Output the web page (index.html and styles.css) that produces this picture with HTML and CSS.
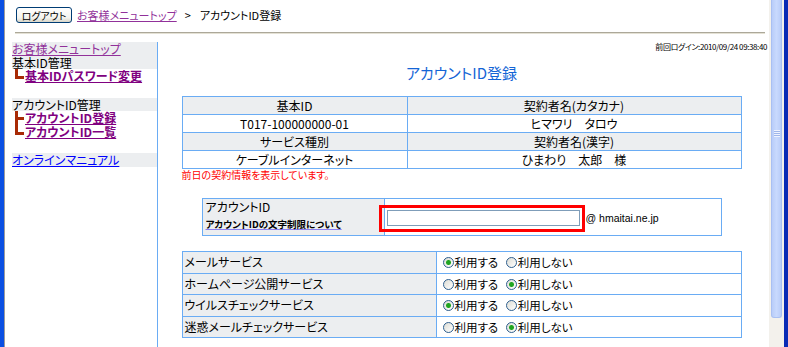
FILE: index.html
```html
<!DOCTYPE html>
<html lang="ja">
<head>
    <meta charset="UTF-8">
    <title>アカウントID登録</title>
    <link rel="stylesheet" href="styles.css">
</head>
<body>
    <div class="window">
        <div class="frame-left"></div>
        <div class="page">
            <div class="header">
                <button class="logout-btn">ログアウト</button>
                <a href="#" class="crumb">お客様メニュートップ</a>
                <span class="sep">&gt;</span>
                <span>アカウントID登録</span>
            </div>

            <div class="layout">
                <div class="sidebar">
                    <div class="side-head"><a href="#" class="visited">お客様メニュートップ</a></div>
                    <div class="side-head">基本ID管理</div>
                    <div class="side-link"><span class="branch last"></span><a href="#">基本IDパスワード変更</a></div>
                    <div class="side-gap"></div>
                    <div class="side-head">アカウントID管理</div>
                    <div class="side-link"><span class="branch mid"></span><a href="#">アカウントID登録</a></div>
                    <div class="side-link"><span class="branch last"></span><a href="#">アカウントID一覧</a></div>
                    <div class="side-gap"></div>
                    <div class="side-head"><a href="#" class="manual">オンラインマニュアル</a></div>
                </div>

                <div class="main">
                    <div class="last-login">前回ログイン:2010/09/24 09:38:40</div>
                    <h1 class="title">アカウントID登録</h1>

                    <div class="block">
                        <table class="info">
                            <tr><th>基本ID</th><th>契約者名(カタカナ)</th></tr>
                            <tr><td>T017-100000000-01</td><td>ヒマワリ　タロウ</td></tr>
                            <tr><th>サービス種別</th><th>契約者名(漢字)</th></tr>
                            <tr><td>ケーブルインターネット</td><td>ひまわり　太郎　様</td></tr>
                        </table>
                        <p class="note">前日の契約情報を表示しています。</p>
                    </div>

                    <table class="account">
                        <tr>
                            <th>
                                <div class="label">アカウントID</div>
                                <a href="#" class="rule-link">アカウントIDの文字制限について</a>
                            </th>
                            <td>
                                <span class="highlight"><input type="text" class="id-input"></span><span class="domain">@ hmaitai.ne.jp</span>
                            </td>
                        </tr>
                    </table>

                    <table class="services">
                        <tr>
                            <th>メールサービス</th>
                            <td>
                                <label><input type="radio" name="mail" checked>利用する</label>
                                <label><input type="radio" name="mail">利用しない</label>
                            </td>
                        </tr>
                        <tr>
                            <th>ホームページ公開サービス</th>
                            <td>
                                <label><input type="radio" name="hp">利用する</label>
                                <label><input type="radio" name="hp" checked>利用しない</label>
                            </td>
                        </tr>
                        <tr>
                            <th>ウイルスチェックサービス</th>
                            <td>
                                <label><input type="radio" name="virus" checked>利用する</label>
                                <label><input type="radio" name="virus">利用しない</label>
                            </td>
                        </tr>
                        <tr>
                            <th>迷惑メールチェックサービス</th>
                            <td>
                                <label><input type="radio" name="spam">利用する</label>
                                <label><input type="radio" name="spam" checked>利用しない</label>
                            </td>
                        </tr>
                    </table>
                </div>
            </div>
        </div>
        <div class="scrollbar">
            <div class="thumb"><div class="grip"></div></div>
        </div>
        <div class="frame-right"></div>
    </div>
</body>
</html>
```

FILE: styles.css
```css
:root {
    --cell-border: #6aacf4;
    --cell-gray: #eceef0;
    --visited: #91319a;
    --branch: #a82a05;
}

body {
    margin: 0;
    font-family: "Noto Sans CJK JP", sans-serif;
    font-feature-settings: "palt";
    font-size: 12px;
    color: #000;
    background: #fff;
}

.window {
    display: flex;
    height: 347px;
    overflow: hidden;
}

.frame-left {
    width: 4px;
    background: #0a4fe2;
    border-right: 1px solid #9c9c9c;
}

.frame-right {
    width: 4px;
    background: #0a2bb5;
}

.page {
    width: 764px;
    box-sizing: border-box;
    padding: 7px 4px 0 7px;
    display: flex;
    flex-direction: column;
}

/* header */
.header {
    display: flex;
    align-items: flex-start;
    height: 25px;
    margin-left: 3px;
    padding-left: 1px;
    font-size: 11px;
    line-height: 16px;
    border-bottom: 1px solid #aca899;
    box-shadow: 0 1px #e4e1d4;
}

.logout-btn {
    width: 56px;
    height: 16px;
    padding: 0;
    font-family: inherit;
    font-feature-settings: "palt";
    font-size: 10px;
    line-height: 13px;
    border: 1px solid #003c74;
    border-radius: 3px;
    background: linear-gradient(#ffffff, #f3f3ee 70%, #d8d5c8);
    color: #000;
}

.crumb {
    margin-left: 5px;
    color: var(--visited);
}

.sep {
    margin: 0 9px 0 8px;
}

/* body layout */
.layout {
    flex: 1;
    display: flex;
    margin-top: 9px;
}

.sidebar {
    width: 145px;
    flex-shrink: 0;
    border-right: 1px solid var(--cell-border);
}

.side-head {
    background: var(--cell-gray);
    font-size: 12px;
    line-height: 13.5px;
}

.side-head a.visited {
    color: var(--visited);
}

.side-head a.manual {
    color: #0000ff;
}

.side-link {
    display: flex;
    font-size: 12px;
    font-weight: bold;
    line-height: 13.5px;
    padding-left: 3px;
}

.side-link a {
    color: #800080;
}

.branch {
    width: 10px;
    flex-shrink: 0;
}

.branch.last {
    height: 10px;
    background:
        linear-gradient(var(--branch), var(--branch)) left top / 3px 100% no-repeat,
        linear-gradient(var(--branch), var(--branch)) left bottom / 9px 3px no-repeat;
}

.branch.mid {
    background:
        linear-gradient(var(--branch), var(--branch)) left top / 3px 100% no-repeat,
        linear-gradient(var(--branch), var(--branch)) left 6px / 9px 3px no-repeat;
}

.side-gap {
    height: 15px;
}

.main {
    flex: 1;
}

.last-login {
    text-align: right;
    font-size: 8px;
    line-height: 10px;
    letter-spacing: -0.4px;
    margin-right: -2px;
}

.title {
    margin: 11px 0 13px;
    font-size: 15px;
    line-height: 20px;
    font-weight: normal;
    color: #1465d6;
    text-align: center;
}

.block {
    width: 560px;
    margin: 0 auto;
}

table {
    border-collapse: collapse;
    font-size: 12px;
}

th,
td {
    border: 1px solid var(--cell-border);
    padding: 0;
    font-weight: normal;
}

th {
    background: var(--cell-gray);
}

.info {
    width: 560px;
}

.info th,
.info td {
    text-align: center;
    line-height: 17px;
}

.info tr > :first-child {
    width: 224px;
}

.note {
    margin: 0;
    font-size: 10px;
    line-height: 12px;
    color: #ff0000;
}

/* account id */
.account {
    width: 520px;
    margin: 17px auto 0;
}

.account th {
    width: 175px;
    text-align: left;
    vertical-align: top;
    padding: 1px 3px 4px;
}

.label {
    line-height: 14px;
}

.rule-link {
    font-size: 9.5px;
    font-weight: bold;
    line-height: 12px;
    color: #000;
    text-decoration-color: #8a7ff0;
}

.account td {
    padding: 0 2px;
    vertical-align: middle;
}

.highlight {
    position: relative;
    display: inline-block;
    vertical-align: middle;
}

.highlight::after {
    content: "";
    position: absolute;
    top: -5px;
    right: -5px;
    bottom: -6px;
    left: -8px;
    border: 3px solid #ff0000;
}

.id-input {
    display: block;
    width: 193px;
    height: 16px;
    box-sizing: border-box;
    margin: 0;
    border: 1px solid #7f9db9;
}

.domain {
    margin-left: 6px;
    font-family: "Liberation Sans", sans-serif;
    font-size: 10.5px;
    vertical-align: middle;
}

/* services */
.services {
    width: 560px;
    margin: 15px auto 0;
}

.services th,
.services td {
    line-height: 20.5px;
}

.services th {
    width: 251px;
    text-align: left;
    padding-left: 2px;
}

.services td {
    padding-left: 6px;
    font-size: 11.5px;
}

.services label {
    margin-right: 5px;
}

input[type="radio"] {
    appearance: none;
    width: 11px;
    height: 11px;
    margin: 0 1px 0 0;
    border: 1px solid #2f5f8f;
    border-radius: 50%;
    background: linear-gradient(135deg, #dcdcd4, #ffffff);
    vertical-align: -1px;
}

input[type="radio"]:checked {
    background: radial-gradient(circle, #21a421 0 2px, #7fcf7f 2.5px, transparent 3px),
                linear-gradient(135deg, #dcdcd4, #ffffff);
}

/* scrollbar */
.scrollbar {
    width: 15px;
    box-sizing: border-box;
    padding: 0 2px;
    background: #f3f1ec;
}

.thumb {
    height: 318px;
    box-sizing: border-box;
    padding-top: 130px;
    border: 1px solid #a9c0f2;
    border-top: none;
    border-radius: 0 0 3px 3px;
    background: linear-gradient(to right, #b9cdf9, #c8d9fd, #b9cdf9);
}

.grip {
    width: 6px;
    height: 7px;
    margin: 0 auto;
    background: repeating-linear-gradient(#eef3ff 0 1px, #9fb6ea 1px 2px);
}
```
